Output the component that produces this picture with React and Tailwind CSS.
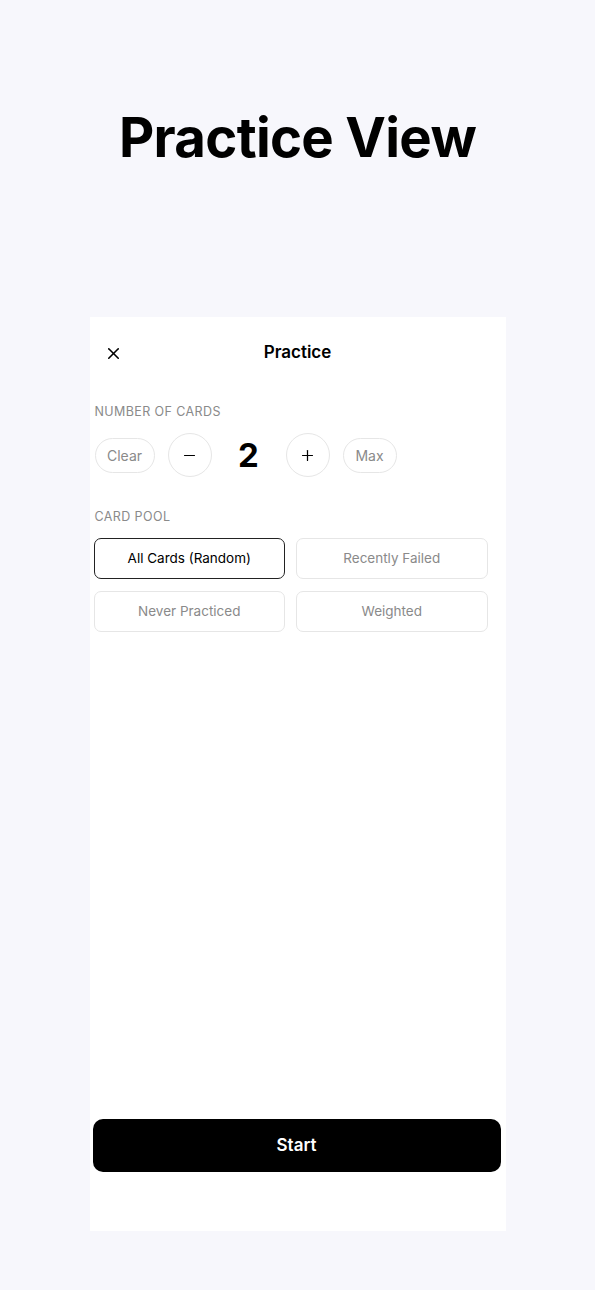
import { X, Minus, Plus } from 'lucide-react';

const POOLS = [
  { label: 'All Cards (Random)', active: true },
  { label: 'Recently Failed' },
  { label: 'Never Practiced' },
  { label: 'Weighted' },
];

export default function App() {
  return (
    <div className="min-h-[1290px] bg-[#f7f7fc] font-['Inter',sans-serif] flex flex-col items-center">
      <h1 className="mt-[104px] text-[54.5px] leading-[66px] font-bold tracking-[-0.7px] text-black">Practice View</h1>

      {/* Modal card */}
      <div className="mt-[147px] w-[416px] h-[914px] bg-white flex flex-col pl-[5px] pr-[18px]">
        <div className="relative -ml-[5px] -mr-[18px] h-[72px] flex items-center justify-center">
          <X className="absolute left-[14px] w-[19px] h-[19px] text-black" strokeWidth={2} />
          <div className="text-[17px] font-semibold text-black">Practice</div>
        </div>

        <div className="mt-[15px] text-[12.5px] leading-[16px] tracking-[0.4px] text-[#8a8a8a]">NUMBER OF CARDS</div>
        <div className="mt-[13px] h-[44px] flex items-center">
          <button className="h-[35px] w-[60px] rounded-full border border-[#e6e6e6] text-[14px] text-[#8a8a8a]">Clear</button>
          <button className="ml-[13px] w-[44px] h-[44px] rounded-full border border-[#e6e6e6] flex items-center justify-center">
            <Minus className="w-[17px] h-[17px] text-black" strokeWidth={1.75} />
          </button>
          <div className="w-[74px] text-center text-[33px] font-bold text-black leading-none">2</div>
          <button className="w-[44px] h-[44px] rounded-full border border-[#e6e6e6] flex items-center justify-center">
            <Plus className="w-[17px] h-[17px] text-black" strokeWidth={1.75} />
          </button>
          <button className="ml-[13px] h-[35px] w-[54px] rounded-full border border-[#e6e6e6] text-[14px] text-[#8a8a8a]">Max</button>
        </div>

        <div className="mt-[32px] text-[12.5px] leading-[16px] tracking-[0.4px] text-[#8a8a8a]">CARD POOL</div>
        <div className="mt-[13px] -ml-[1px] grid grid-cols-2 gap-x-[11px] gap-y-[12px]">
          {POOLS.map(p => (
            <button
              key={p.label}
              className={p.active
                ? 'h-[41px] rounded-[7px] border-[1.5px] border-[#222] text-[13.5px] text-black'
                : 'h-[41px] rounded-[7px] border border-[#e6e6e6] text-[13.5px] text-[#8a8a8a]'}
            >
              {p.label}
            </button>
          ))}
        </div>

        <button className="mt-auto mb-[59px] -mr-[13px] -ml-[2px] h-[53px] rounded-[10px] bg-black text-white text-[17px] font-semibold">Start</button>
      </div>
    </div>
  );
}
